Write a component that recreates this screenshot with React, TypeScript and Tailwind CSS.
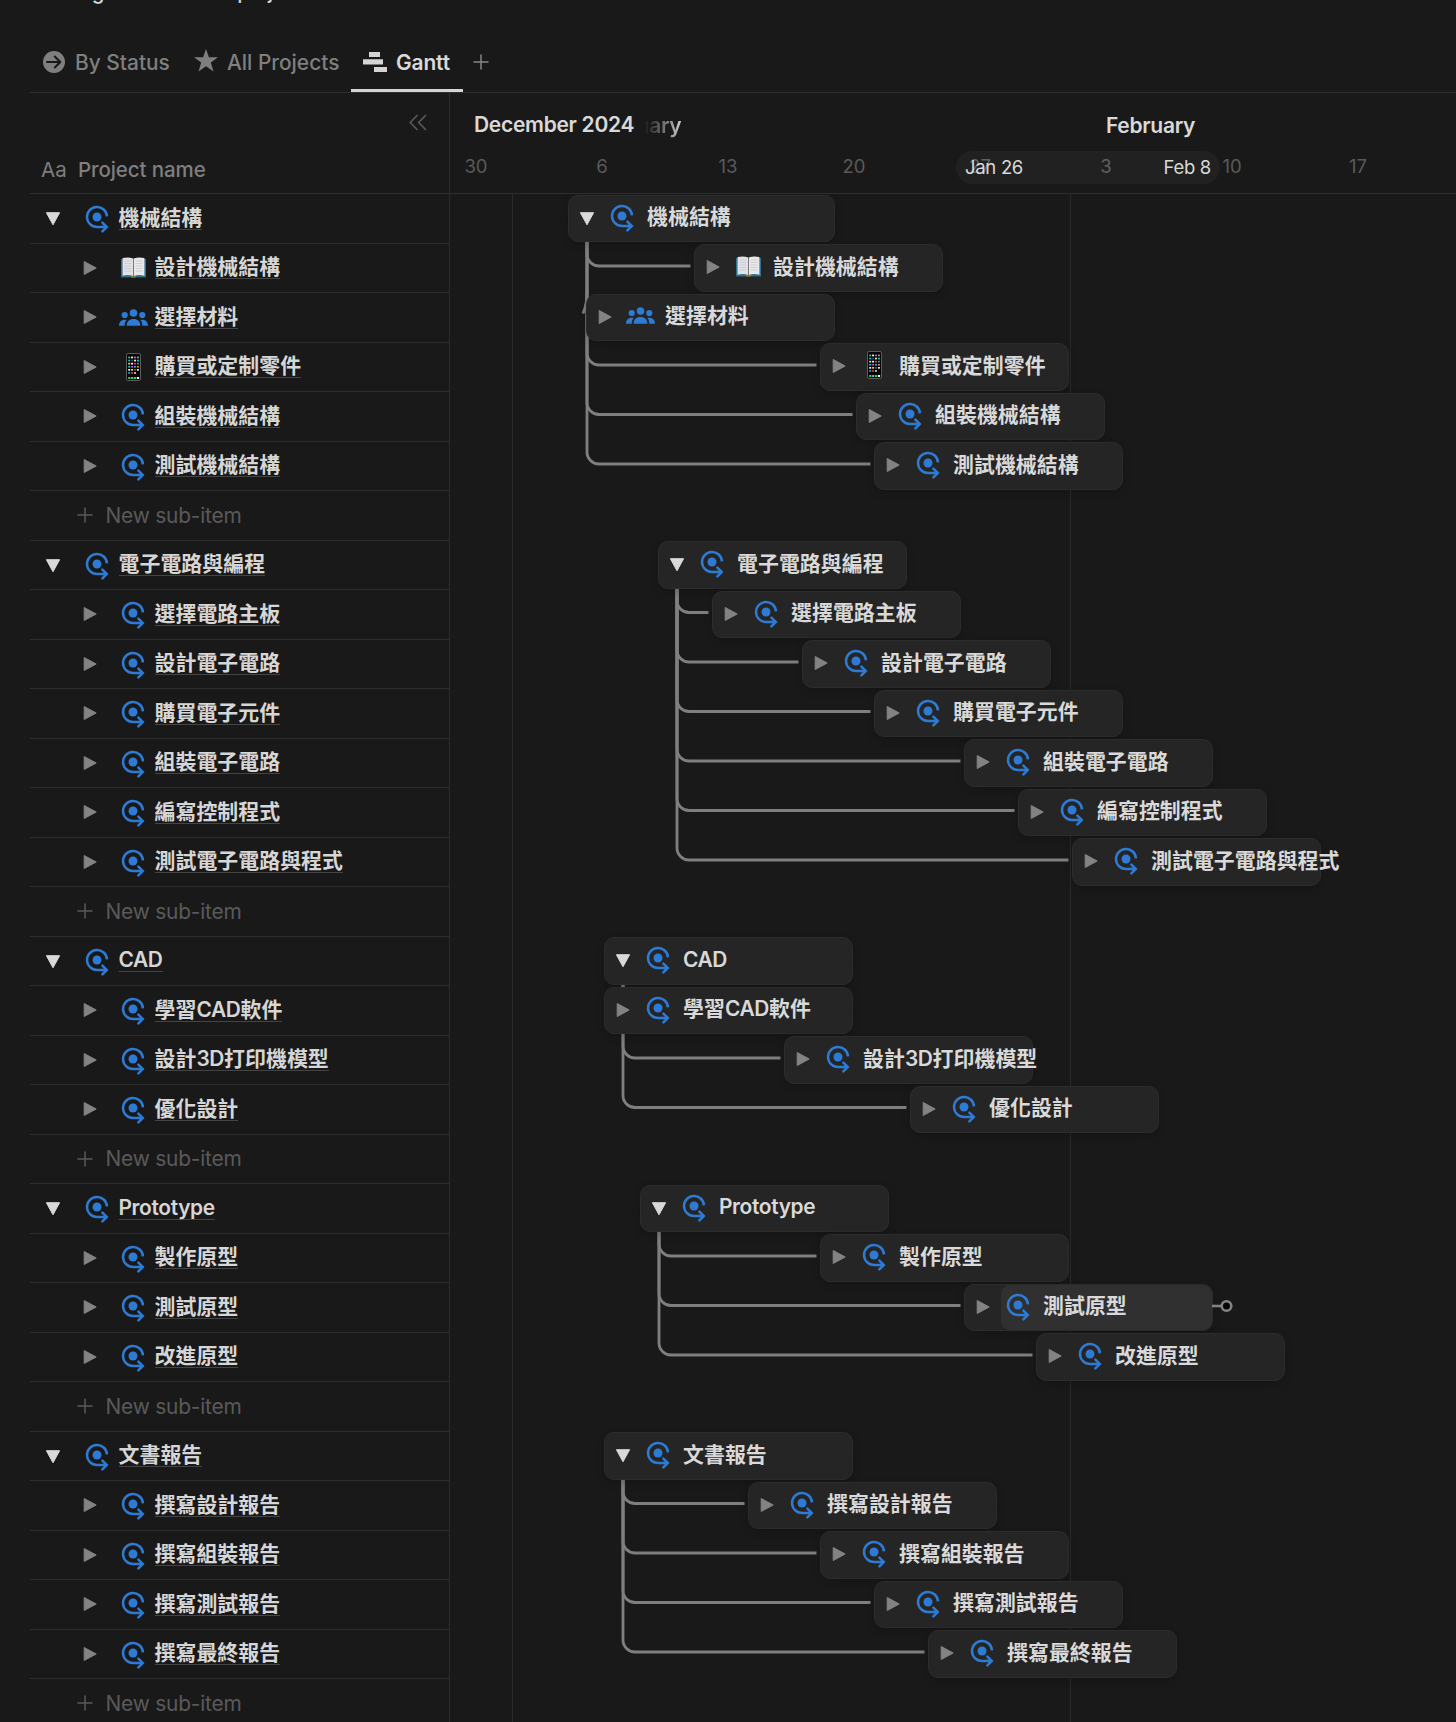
import React from "react";

type Item = { name: string; icon?: "book" | "people" | "phone"; start: number; days?: number; hover?: boolean };
type Group = { title: Item; items: Item[] };

const ROW = 49.5;
const DAY = 18;

const groups: Group[] = [
  {
    title: { name: "機械結構", start: 0, days: 15 },
    items: [
      { name: "設計機械結構", icon: "book", start: 7 },
      { name: "選擇材料", icon: "people", start: 1 },
      { name: "購買或定制零件", icon: "phone", start: 14 },
      { name: "組裝機械結構", start: 16 },
      { name: "測試機械結構", start: 17 },
    ],
  },
  {
    title: { name: "電子電路與編程", start: 5 },
    items: [
      { name: "選擇電路主板", start: 8 },
      { name: "設計電子電路", start: 13 },
      { name: "購買電子元件", start: 17 },
      { name: "組裝電子電路", start: 22 },
      { name: "編寫控制程式", start: 25 },
      { name: "測試電子電路與程式", start: 28 },
    ],
  },
  {
    title: { name: "CAD", start: 2 },
    items: [
      { name: "學習CAD軟件", start: 2 },
      { name: "設計3D打印機模型", start: 12 },
      { name: "優化設計", start: 19 },
    ],
  },
  {
    title: { name: "Prototype", start: 4 },
    items: [
      { name: "製作原型", start: 14 },
      { name: "測試原型", start: 22, hover: true },
      { name: "改進原型", start: 26 },
    ],
  },
  {
    title: { name: "文書報告", start: 2 },
    items: [
      { name: "撰寫設計報告", start: 10 },
      { name: "撰寫組裝報告", start: 14 },
      { name: "撰寫測試報告", start: 17 },
      { name: "撰寫最終報告", start: 20 },
    ],
  },
];

// Horizontal offset of a bar inside the timeline pane.
const barX = (start: number) => 117.5 + start * DAY;

function TargetIcon() {
  return (
    <svg width="26" height="28" viewBox="0 0 26 28" fill="none" className="shrink-0">
      <path d="M23 11.3A10 10 0 1 0 13 22H22.4" stroke="#2d7bd4" strokeWidth="2.5" strokeLinecap="butt" />
      <path d="M18.4 17.6L22.8 22L18.4 26.4" stroke="#2d7bd4" strokeWidth="2.5" strokeLinecap="round" strokeLinejoin="miter" />
      <circle cx="13" cy="12" r="4.5" fill="#2d7bd4" />
    </svg>
  );
}

function PeopleIcon() {
  return (
    <svg width="29" height="18" viewBox="0 0 29 18" fill="#2d7bd4" className="-mt-[1px] shrink-0">
      <circle cx="14.5" cy="4" r="3.8" />
      <circle cx="5.7" cy="6" r="3.1" />
      <circle cx="23.3" cy="6" r="3.1" />
      <path d="M7.6 16.7C7.6 12.6 10.3 9.9 14.5 9.9S21.4 12.6 21.4 16.7Z" />
      <path d="M0 16.7C0 13 2.2 10.7 5.6 10.7C6.3 10.7 7 10.8 7.6 11C6.3 12.4 5.7 14.3 5.7 16.7Z" />
      <path d="M29 16.7C29 13 26.8 10.7 23.4 10.7C22.7 10.7 22 10.8 21.4 11C22.7 12.4 23.3 14.3 23.3 16.7Z" />
    </svg>
  );
}

function BookIcon() {
  return (
    <svg width="25" height="21" viewBox="0 0 25 21" className="-mt-[2px] shrink-0">
      <path d="M0 2H25V20.4H0Z" fill="#2f7190" />
      <path d="M10 18.5H15V20.6H10Z" fill="#8a7a25" />
      <path d="M1.6 1C5.5 .1 9 .1 12.2 1.6V19C9 17.8 5 17.8 1.6 18.8Z" fill="#e2e2e6" />
      <path d="M23.4 1C19.5 .1 16 .1 12.8 1.6V19C16 17.8 20 17.8 23.4 18.8Z" fill="#e9e9ec" />
      <path d="M12.5 1.6V19" stroke="#77777c" strokeWidth="1" />
      <path d="M3.5 4H10.5M3.5 6.5H10.5M3.5 9H10.5M3.5 11.5H10.5M3.5 14H10.5M14.5 4H21.5M14.5 6.5H21.5M14.5 9H21.5M14.5 11.5H21.5M14.5 14H21.5" stroke="#c6c6cc" strokeWidth=".8" />
    </svg>
  );
}

function PhoneIcon() {
  const colors = ["#39d353", "#f5f5f5", "#b05cc8", "#9a9a9a", "#23b4e8", "#30506a", "#f2e9b0", "#20d0c0", "#e7e04a", "#f5f5f5", "#e03c3c", "#2f8be0", "#20c0d8", "#e040c0", "#2aa0f0", "#f08020", "#f0f0f0", "#f0d040", "#555", "#e8e8e8", "#18a8e8", "#e04040", "#c8c8c8", "#000"];
  return (
    <svg width="15" height="28" viewBox="0 0 15 28" className="-mt-[2px] shrink-0">
      <rect x=".5" y=".5" width="14" height="27" rx="1.6" fill="#050505" stroke="#5c5c5c" />
      {colors.map((c, i) => (
        <rect key={i} x={2.2 + (i % 4) * 2.9} y={3.6 + Math.floor(i / 4) * 3.1} width="2" height="1.7" fill={c} />
      ))}
      {["#39d353", "#35c9c0", "#39d353", "#f5f5f5"].map((c, i) => (
        <rect key={i} x={2.2 + i * 2.9} y="24" width="2.2" height="2" fill={c} />
      ))}
    </svg>
  );
}

function ItemIcon({ kind }: { kind?: Item["icon"] }) {
  return (
    <span className="flex h-[28px] w-[30px] shrink-0 items-center justify-center">
      {kind === "book" ? <BookIcon /> : kind === "people" ? <PeopleIcon /> : kind === "phone" ? <PhoneIcon /> : <TargetIcon />}
    </span>
  );
}

// Latin runs are tracked slightly tighter than the Chinese ones.
function Name({ text }: { text: string }) {
  return (
    <>
      {text.split(/([A-Za-z0-9]+)/).filter(Boolean).map((part, i) => (
        <span key={i} className={/^[A-Za-z0-9]/.test(part) ? "font-semibold tracking-[-0.35px]" : "font-semibold tracking-[0.05px]"}>{part}</span>
      ))}
    </>
  );
}

function Caret({ open }: { open?: boolean }) {
  return (
    <svg width="16" height="16" viewBox="0 0 16 16" className={open ? "mt-[2px] shrink-0" : "shrink-0"}>
      {open ? (
        <path d="M1.4 1.7H14.6L8 13.8Z" fill="#d9d9d9" stroke="#d9d9d9" strokeWidth="1" strokeLinejoin="round" />
      ) : (
        <path d="M2.2 1.5V14.5L14.2 8Z" fill="#838383" stroke="#838383" strokeWidth="1" strokeLinejoin="round" />
      )}
    </svg>
  );
}

function Plus({ className }: { className: string }) {
  return (
    <svg width="16" height="16" viewBox="0 0 16 16" className={className} stroke="currentColor" strokeWidth="1.5">
      <path d="M8 .5V15.5M.5 8H15.5" />
    </svg>
  );
}

function Tabs() {
  return (
    <nav className="ml-[30px] flex h-[65px] shrink-0 items-stretch border-b border-[#2f2f2f] text-[20.9px] font-medium text-[#7f7f7f]">
      <div className="flex w-[152px] items-center pt-[3px] pl-[13px]">
        <svg width="22" height="22" viewBox="0 0 22 22" className="mr-[10px]">
          <circle cx="11" cy="11" r="11" fill="#7f7f7f" />
          <path d="M4 11H17M11.8 5.5L17.3 11L11.8 16.5" fill="none" stroke="#191919" strokeWidth="2" strokeLinecap="round" strokeLinejoin="round" />
        </svg>
        <span className="mt-[2px] whitespace-nowrap">By Status</span>
      </div>
      <div className="flex w-[169px] items-center pt-[3px] pl-[12px]">
        <svg width="24" height="23" viewBox="0 0 24 23" className="mr-[9px] -mt-[2px]">
          <path d="M12 0L14.9 8.2H24L16.8 13.6L19.5 22.5L12 17.2L4.5 22.5L7.2 13.6L0 8.2H9.1Z" fill="#7f7f7f" />
        </svg>
        <span className="mt-[2px] whitespace-nowrap">All Projects</span>
      </div>
      <div className="flex w-[112px] items-center border-b-[3px] border-[#d4d4d4] pt-[4px] pl-[12px] text-[#d9d9d9]">
        <svg width="24" height="20" viewBox="0 0 24 20" className="mr-[9px] mt-[3px]" fill="#d4d4d4">
          <path d="M6 0H17V5H6ZM0 7.3H20V12.5H0ZM11 15H24V20H11Z" />
        </svg>
        <span className="mt-[4px] font-semibold tracking-[-0.1px]">Gantt</span>
      </div>
      <div className="flex items-center pt-[3px] pl-[10px]">
        <Plus className="text-[#858585]" />
      </div>
    </nav>
  );
}

function TableRow({ item, top }: { item: Item; top?: boolean }) {
  return (
    <div className={"flex h-[49.5px] items-center border-b border-[#2d2d2d] " + (top ? "pl-[15px]" : "pl-[52px]")}>
      <Caret open={top} />
      <span className={top ? "ml-[21px] mt-[2px]" : "ml-[20px] mt-[2px]"}>
        <ItemIcon kind={item.icon} />
      </span>
      <span className="ml-[6.5px] -mt-[1px] whitespace-nowrap border-b border-[#444] text-[20.9px] leading-[23px] text-[#d6d6d6]">
        <Name text={item.name} />
      </span>
    </div>
  );
}

function NewSubItem() {
  return (
    <div className="flex h-[49.5px] items-center border-b border-[#2d2d2d] pl-[47px] text-[20.9px] tracking-[-0.2px] text-[#5a5a5a]">
      <Plus className="text-[#5a5a5a]" />
      <span className="ml-[12.5px]">New sub-item</span>
    </div>
  );
}

function Bar({ item, top }: { item: Item; top?: boolean }) {
  return (
    <div className="flex h-[49.5px] items-start pt-[0.5px]">
      <div
        className="relative flex h-[47.5px] shrink-0 items-center rounded-[10px] border border-[#2c2c2c] bg-[#252525] pl-[10px] shadow-[0_3px_8px_rgba(0,0,0,0.18)]"
        style={{ marginLeft: barX(item.start), width: (item.days ?? 14) * DAY - 2.5 }}
      >
        {item.hover && <div className="absolute inset-y-0 right-0 left-[36px] rounded-[9px] bg-[#303030]" />}
        <div className="relative -mt-[1px] flex items-center">
          <Caret open={top} />
          <span className="ml-[12.5px]">
            <ItemIcon kind={item.icon} />
          </span>
          <span className="ml-[10px] -mt-[1px] whitespace-nowrap text-[20.9px] leading-[24px] text-[#d9d9d9]">
            <Name text={item.name} />
          </span>
        </div>
        {item.hover && (
          <svg width="22" height="14" viewBox="0 0 22 14" className="absolute -right-[22px] top-[14px]">
            <path d="M0 7H10" stroke="#838383" strokeWidth="2.6" />
            <circle cx="14.5" cy="7" r="4.8" fill="#050505" stroke="#838383" strokeWidth="2.6" />
          </svg>
        )}
      </div>
    </div>
  );
}

function Connectors() {
  const paths: string[] = [];
  let row = 0;
  for (const g of groups) {
    const x = barX(g.title.start) + 19.5;
    const y0 = row * ROW + 48;
    g.items.forEach((it, i) => {
      const y = (row + 1 + i) * ROW + 22.5;
      const end = barX(it.start) - 3;
      if (end > x + 12) paths.push(`M${x} ${y0}V${y - 12}A12 12 0 0 0 ${x + 12} ${y}H${end}`);
      else paths.push(`M${x} ${y - 24}Q${x} ${y - 11} ${x - 4} ${y - 2}`);
    });
    row += g.items.length + 2;
  }
  return (
    <svg width="1006" height="1530" className="absolute top-0 left-0" fill="none" stroke="#7f7f7f" strokeWidth="2.8">
      {paths.map((d) => (
        <path key={d} d={d} />
      ))}
    </svg>
  );
}

function TimelineHeader() {
  const ticks = ["30", "6", "13", "20", "27", "3", "10", "17"];
  return (
    <div className="relative h-[101px] border-b border-[#2f2f2f]">
      <div className="flex pt-[18px] text-[21px] leading-[28px] font-semibold tracking-[-0.3px] text-[#d9d9d9]">
        <span className="ml-[24px] w-[170px] whitespace-nowrap">December 2024</span>
        <span className="mt-[1px] w-[462px] bg-gradient-to-r from-[#191919] to-[#c8c8c8] to-[36px] bg-clip-text text-transparent">ıary</span>
        <span className="mt-[1px]">February</span>
      </div>
      <div className="mt-[13px] -ml-[37px] flex text-[18.5px] leading-[26px] text-[#5a5a5a]">
        {ticks.map((t) => (
          <span key={t} className="w-[126px] shrink-0 text-center">{t}</span>
        ))}
      </div>
      <div className="absolute top-[58px] left-[506px] flex h-[33px] w-[264px] items-center justify-between rounded-full bg-white/[0.035] px-[9px] text-[18.5px] tracking-[-0.3px] text-[#d9d9d9]">
        <span>Jan 26</span>
        <span>Feb 8</span>
      </div>
    </div>
  );
}

export default function App() {
  return (
    <div className="flex h-[1722px] w-[1456px] flex-col overflow-hidden bg-[#191919] font-['Inter','Noto_Sans_CJK_TC',sans-serif]">
      <div className="flex h-[28px] shrink-0 items-start overflow-hidden">
        <p className="-mt-[22px] ml-[40px] whitespace-nowrap text-[20.5px] leading-[28px] font-medium tracking-[-0.65px] text-[#d6d6d6]">Manage and execute projects from start to finish.</p>
      </div>
      <Tabs />
      <div className="flex flex-1">
        <aside className="ml-[30px] w-[420px] shrink-0 border-r border-[#2d2d2d]">
          <div className="flex h-[101px] flex-col border-b border-[#2f2f2f] text-[#7f7f7f]">
            <div className="flex justify-end pt-[21px] pr-[22px]">
              <svg width="18" height="17" viewBox="0 0 18 17" fill="none" stroke="#5a5a5a" strokeWidth="1.6">
                <path d="M8.5 1L1.2 8.5L8.5 16M17 1L9.7 8.5L17 16" />
              </svg>
            </div>
            <div className="mt-[25px] flex items-center pl-[11px] text-[20.5px] leading-[28px]">
              <span className="w-[37px] text-[20.5px]">Aa</span>
              <span className="font-medium tracking-[-0.1px]">Project name</span>
            </div>
          </div>
          {groups.map((g) => (
            <section key={g.title.name}>
              <TableRow item={g.title} top />
              {g.items.map((it) => (
                <TableRow key={it.name} item={it} />
              ))}
              <NewSubItem />
            </section>
          ))}
        </aside>
        <main className="w-[1006px] shrink-0">
          <TimelineHeader />
          <div className="relative h-[1535px]">
            <div className="absolute inset-y-0 left-[62px] w-px bg-[#2a2a2a]" />
            <div className="absolute inset-y-0 left-[620px] w-px bg-[#2a2a2a]" />
            <Connectors />
            <div className="relative">
              {groups.map((g) => (
                <div key={g.title.name} className="pb-[49.5px]">
                  <Bar item={g.title} top />
                  {g.items.map((it) => (
                    <Bar key={it.name} item={it} />
                  ))}
                </div>
              ))}
            </div>
          </div>
        </main>
      </div>
    </div>
  );
}
